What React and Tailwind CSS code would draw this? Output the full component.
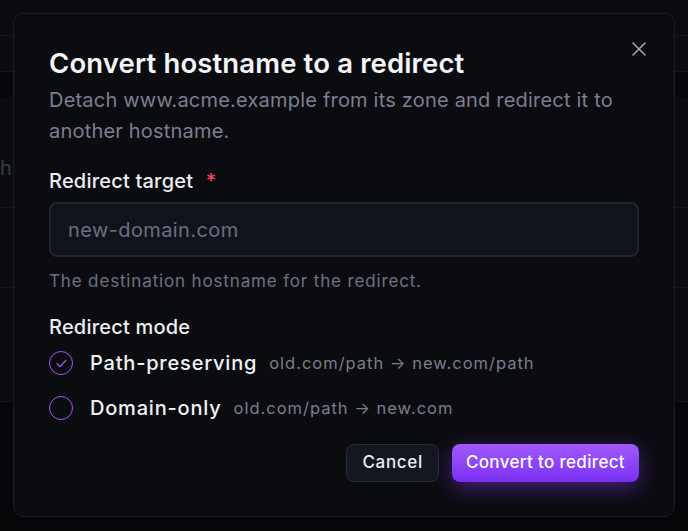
import React, { useState } from "react";

// Background page rows that sit behind the dialog overlay
const PageBehind = () => (
  <div className="flex flex-col h-full">
    <div className="h-[36px] border-b border-[#16171d]" />
    <div className="h-[36px] border-b border-[#16171d]" />
    <div className="h-[25px] bg-[#050608]" />
    <div className="h-[111px] border-b border-[#16171d] flex items-end pb-[24px]">
      <span className="text-[20px] text-[#3a3c47]">h</span>
    </div>
    <div className="h-[80px] border-b border-[#16171d]" />
    <div className="h-[114px] border-b border-[#16171d]" />
    <div className="flex-1 bg-[#050608]" />
  </div>
);

const RadioOption = ({ checked, label, hint, onSelect }) => (
  <button type="button" onClick={onSelect} className="flex items-center text-left h-[24px]">
    <span className="w-[24px] h-[24px] rounded-full border-[1.5px] border-[#a855f7] flex items-center justify-center shrink-0">
      {checked && (
        <svg width="15" height="15" viewBox="0 0 24 24" fill="none" stroke="#a855f7" strokeWidth="2.2" strokeLinecap="round" strokeLinejoin="round">
          <path d="M5 12.5l4.5 4.5L19 7" />
        </svg>
      )}
    </span>
    <span className="ml-[17px] text-[20px] font-medium tracking-[0.04em] text-[#f1f2f5]">{label}</span>
    <span className="ml-[12px] text-[16.5px] tracking-[0.06em] text-[#7b7e8e]">{hint}</span>
  </button>
);

const App = () => {
  const [mode, setMode] = useState("path");

  return (
    <div className="relative w-[688px] h-[531px] bg-[#0b0c10] overflow-hidden" style={{ fontFamily: "Inter, 'Noto Sans', sans-serif" }}>
      <PageBehind />

      {/* Dialog */}
      <div className="absolute left-[13px] top-[13px] w-[662px] h-[504px] rounded-[10px] border border-[#1c1d24] bg-[#0b0c10] px-[35px] pt-[31px]">
        <button type="button" className="absolute right-[28px] top-[28px] text-[#a3a6b3]">
          <svg width="14" height="14" viewBox="0 0 14 14" fill="none" stroke="currentColor" strokeWidth="1.6" strokeLinecap="round">
            <path d="M1 1l12 12M13 1L1 13" />
          </svg>
        </button>

        <h2 className="text-[27.5px] leading-[36px] font-semibold text-[#f4f5f7] tracking-[0.005em]">
          Convert hostname to a redirect
        </h2>
        <p className="mt-[4px] text-[20px] leading-[31px] text-[#7c7f90] tracking-[0.01em] pr-[10px]">
          Detach www.acme.example from its zone and redirect it to another hostname.
        </p>

        <label className="block mt-[19px] text-[20px] leading-[30px] font-medium text-[#eceef2] tracking-[0.01em]">
          Redirect target <span className="ml-[7px] text-[#f43f5e]">*</span>
        </label>
        <input
          type="text"
          placeholder="new-domain.com"
          className="mt-[6px] w-full h-[55px] rounded-[8px] border-2 border-[#23252d] bg-[#11131a] px-[17px] text-[20px] text-[#e5e7eb] tracking-[0.02em] placeholder:text-[#6c6f80] outline-none"
        />
        <p className="mt-[12px] text-[17px] leading-[24px] text-[#6f7284] tracking-[0.05em]">
          The destination hostname for the redirect.
        </p>

        <div className="mt-[20px] text-[20px] leading-[28px] font-medium text-[#eceef2] tracking-[0.01em]">Redirect mode</div>
        <div className="mt-[10px] flex flex-col gap-[21px]">
          <RadioOption
            checked={mode === "path"}
            onSelect={() => setMode("path")}
            label="Path-preserving"
            hint="old.com/path → new.com/path"
          />
          <RadioOption
            checked={mode === "domain"}
            onSelect={() => setMode("domain")}
            label="Domain-only"
            hint="old.com/path → new.com"
          />
        </div>

        <div className="mt-[24px] flex justify-end gap-[13px]">
          <button type="button" className="h-[38px] px-[15px] rounded-[8px] border border-[#2a2c36] bg-[#151720] text-[17px] font-medium tracking-[0.04em] text-[#eceef2]">
            Cancel
          </button>
          <button type="button" className="h-[38px] px-[14px] rounded-[8px] bg-gradient-to-b from-[#a259fb] to-[#7a2df2] text-[17px] font-medium tracking-[0.02em] text-white shadow-[0_6px_22px_rgba(139,62,246,0.45)]">
            Convert to redirect
          </button>
        </div>
      </div>
    </div>
  );
};

export default App;
